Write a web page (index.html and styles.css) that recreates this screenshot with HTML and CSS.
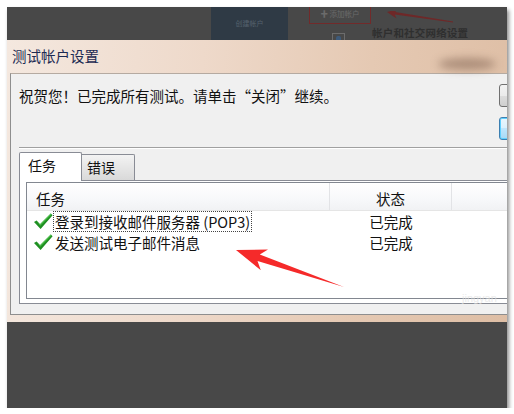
FILE: index.html
```html
<!DOCTYPE html>
<html lang="zh-CN">
<head>
<meta charset="utf-8">
<title>测试帐户设置</title>
<link rel="stylesheet" href="styles.css">
</head>
<body>
<div class="screen">
  <div class="topbar">
    <div class="tb-nav"><span>创建帐户</span></div>
    <div class="tb-mid">
      <div class="tb-add">✚ 添加帐户</div>
      <div class="tb-icon"><span class="tb-dot"></span></div>
    </div>
    <div class="tb-right">
      <svg class="tb-arrow" width="68" height="12" viewBox="0 0 68 12"><polygon points="1,1 12,-2 9.3,1 67,10.5 67,11.5 8.7,3.6 10.5,7.5" fill="#6e2828"/></svg>
      <div class="tb-label">帐户和社交网络设置</div>
    </div>
  </div>
  <div class="dialog">
    <div class="titlebar"><span class="title">测试帐户设置</span><span class="smudge"></span></div>
    <div class="client">
      <div class="top">
        <p class="msg">祝贺您！已完成所有测试。请单击“关闭”继续。</p>
        <div class="btns">
          <div class="btn"></div>
          <div class="btn focus"></div>
        </div>
      </div>
      <div class="sep"></div>
      <div class="tabs">
        <div class="tab active">任务</div>
        <div class="tab">错误</div>
      </div>
      <div class="panel">
        <div class="list">
          <div class="hdr">
            <div class="c1">任务</div>
            <div class="c2">状态</div>
            <div class="c3"></div>
          </div>
          <div class="row">
            <div class="c1"><svg class="check" width="20" height="17" viewBox="0 0 20 17"><polygon points="1,9 3.6,7.4 7,11.3 17.8,0.6 19.6,2.2 7.6,16" fill="#1f8f22"/><polygon points="3.6,7.4 7,11.3 17.8,0.6 18.6,1.3 7.2,12.8" fill="#4cc04a"/></svg><span class="txt focused">登录到接收邮件服务器 (POP3)</span></div>
            <div class="c2">已完成</div>
          </div>
          <div class="row">
            <div class="c1"><svg class="check" width="20" height="17" viewBox="0 0 20 17"><polygon points="1,9 3.6,7.4 7,11.3 17.8,0.6 19.6,2.2 7.6,16" fill="#1f8f22"/><polygon points="3.6,7.4 7,11.3 17.8,0.6 18.6,1.3 7.2,12.8" fill="#4cc04a"/></svg><span class="txt">发送测试电子邮件消息</span></div>
            <div class="c2">已完成</div>
          </div>
        </div>
      </div>
    </div>
  </div>
  <svg class="red-arrow" width="500" height="401" viewBox="0 0 500 401"><polygon points="229,243 261,242.4 252.8,247.5 337,280 250.5,254.1 253.8,263.2" fill="#f52a2a"/></svg>
  <span class="wm">jingyan</span>
</div>
</body>
</html>
```
FILE: styles.css
```css
* { box-sizing: border-box; margin: 0; padding: 0; }
body { background: #fff; font-family: "Noto Sans CJK SC", "Noto Sans", sans-serif; }

.screen {
  position: relative;
  margin: 7px 0 0 7px;
  width: 500px;
  height: 401px;
  background: #484848;
  overflow: hidden;
  box-shadow: 2px 3px 4px rgba(0, 0, 0, 0.45);
}

/* faint background application bar */
.topbar { height: 33px; display: flex; align-items: flex-start; }
.tb-nav {
  margin-left: 204px;
  width: 77px;
  height: 33px;
  background: #2f3a45;
  color: #56626e;
  font-size: 7px;
  line-height: 33px;
  text-align: center;
}
.tb-mid { margin-left: 21px; width: 62px; display: flex; flex-direction: column; align-items: center; }
.tb-add {
  width: 62px;
  height: 17px;
  border: 1.5px solid #722a2a;
  border-top: none;
  color: #6b6b6b;
  font-size: 7.5px;
  line-height: 14px;
  text-align: center;
}
.tb-icon {
  margin-top: 9px;
  margin-right: 3px;
  width: 13px;
  height: 7px;
  border: 1px solid #6c6c6c;
  border-bottom: none;
  display: flex;
  justify-content: center;
  align-items: flex-end;
}
.tb-dot { width: 5px; height: 4px; border-radius: 2px 2px 0 0; background: #3d5a7a; }
.tb-right { margin-left: 1px; display: flex; flex-direction: column; }
.tb-arrow { margin-left: 14px; margin-top: 4px; display: block; }
.tb-label {
  margin-top: 4px;
  font-size: 10.5px;
  letter-spacing: 0.2px;
  line-height: 12px;
  font-weight: bold;
  color: #2f2f2f;
}

/* dialog */
.dialog {
  width: 540px;
  height: 282px;
  padding: 0 0 7px 3px;
  background: linear-gradient(95deg, #f4e8df 0%, #eed9ca 35%, #e5c9b3 65%, #dcbba1 100%);
  display: flex;
  flex-direction: column;
}
.titlebar {
  position: relative;
  height: 33px;
  padding: 6px 0 0 2px;
  font-size: 14.5px;
  line-height: 20px;
  color: #1c2a52;
}
.smudge {
  position: absolute;
  left: 428px;
  top: 18px;
  width: 58px;
  height: 12px;
  border-radius: 50%;
  background: rgba(95, 65, 50, 0.4);
  filter: blur(4px);
}
.client {
  flex: 1;
  background: #f0f0f0;
  border-left: 1px solid #8e8e8e;
  border-top: 1px solid #b5aaa1;
  border-bottom: 1px solid #8e8e8e;
  padding-left: 8px;
}
.top { display: flex; height: 73px; }
.msg {
  flex: none;
  width: 480px;
  padding-top: 12px;
  font-size: 14.5px;
  line-height: 19px;
  color: #111;
}
.btns { flex: none; padding-top: 10px; display: flex; flex-direction: column; gap: 10px; }
.btn {
  width: 75px;
  height: 23px;
  border: 1px solid #707070;
  border-radius: 3px;
  background: linear-gradient(#f2f2f2, #ebebeb 50%, #dddddd 50%, #cfcfcf);
}
.btn.focus {
  border-color: #3c7fb1;
  box-shadow: inset 0 0 0 1px #5fd0ff;
  background: linear-gradient(#eaf6fd, #d9f0fc 50%, #bee6fd 50%, #a7d9f5);
}
.sep { height: 2px; border-top: 1px solid #a0a0a0; border-bottom: 1px solid #fff; }

.tabs {
  position: relative;
  z-index: 1;
  display: flex;
  align-items: flex-end;
  height: 32px;
  margin-bottom: -1px;
  font-size: 14px;
  color: #111;
}
.tab {
  height: 26px;
  margin-bottom: 1px;
  padding: 2px 0 0 5px;
  width: 53px;
  line-height: 20px;
  border: 1px solid #898c95;
  border-bottom: none;
  border-left: none;
  border-radius: 0 2px 0 0;
  background: linear-gradient(#f3f3f3, #e6e6e6 50%, #d9d9d9);
}
.tab.active {
  height: 29px;
  margin-bottom: 0;
  width: 63px;
  padding: 2px 0 0 8px;
  border-left: 1px solid #898c95;
  border-radius: 2px 2px 0 0;
  background: #fff;
}

.panel {
  height: 124px;
  border: 1px solid #898c95;
  background: #fff;
  padding: 1px 0 4px 6px;
}
.list {
  height: 117px;
  border: 1px solid #828790;
  background: #fff;
  font-size: 14.5px;
  color: #111;
}
.hdr {
  display: flex;
  height: 28px;
  border-bottom: 1px solid #e5e5e5;
  background: linear-gradient(#ffffff, #f7f8fa 60%, #f1f2f4);
}
.hdr .c1, .hdr .c2 { border-right: 1px solid #e2e3e6; padding-top: 6px; line-height: 20px; }
.hdr .c1 { width: 303px; padding-left: 9px; }
.hdr .c2 { width: 122px; text-align: center; }
.hdr .c3 { flex: 1; }

.row { display: flex; height: 21px; align-items: center; }
.row .c1 { width: 303px; display: flex; align-items: center; padding-left: 6px; }
.row .c2 { width: 122px; text-align: center; line-height: 21px; }
.check { display: block; flex: none; }
.txt { padding: 0 1px; line-height: 19px; border: 1px solid transparent; }
.txt.focused { border: 1px dotted #444; }

.red-arrow { position: absolute; left: 0; top: 0; pointer-events: none; }
.wm {
  position: absolute;
  left: 455px;
  top: 285px;
  font-size: 11px;
  color: rgba(225, 225, 225, 0.7);
  font-family: "Liberation Sans", sans-serif;
}
```
